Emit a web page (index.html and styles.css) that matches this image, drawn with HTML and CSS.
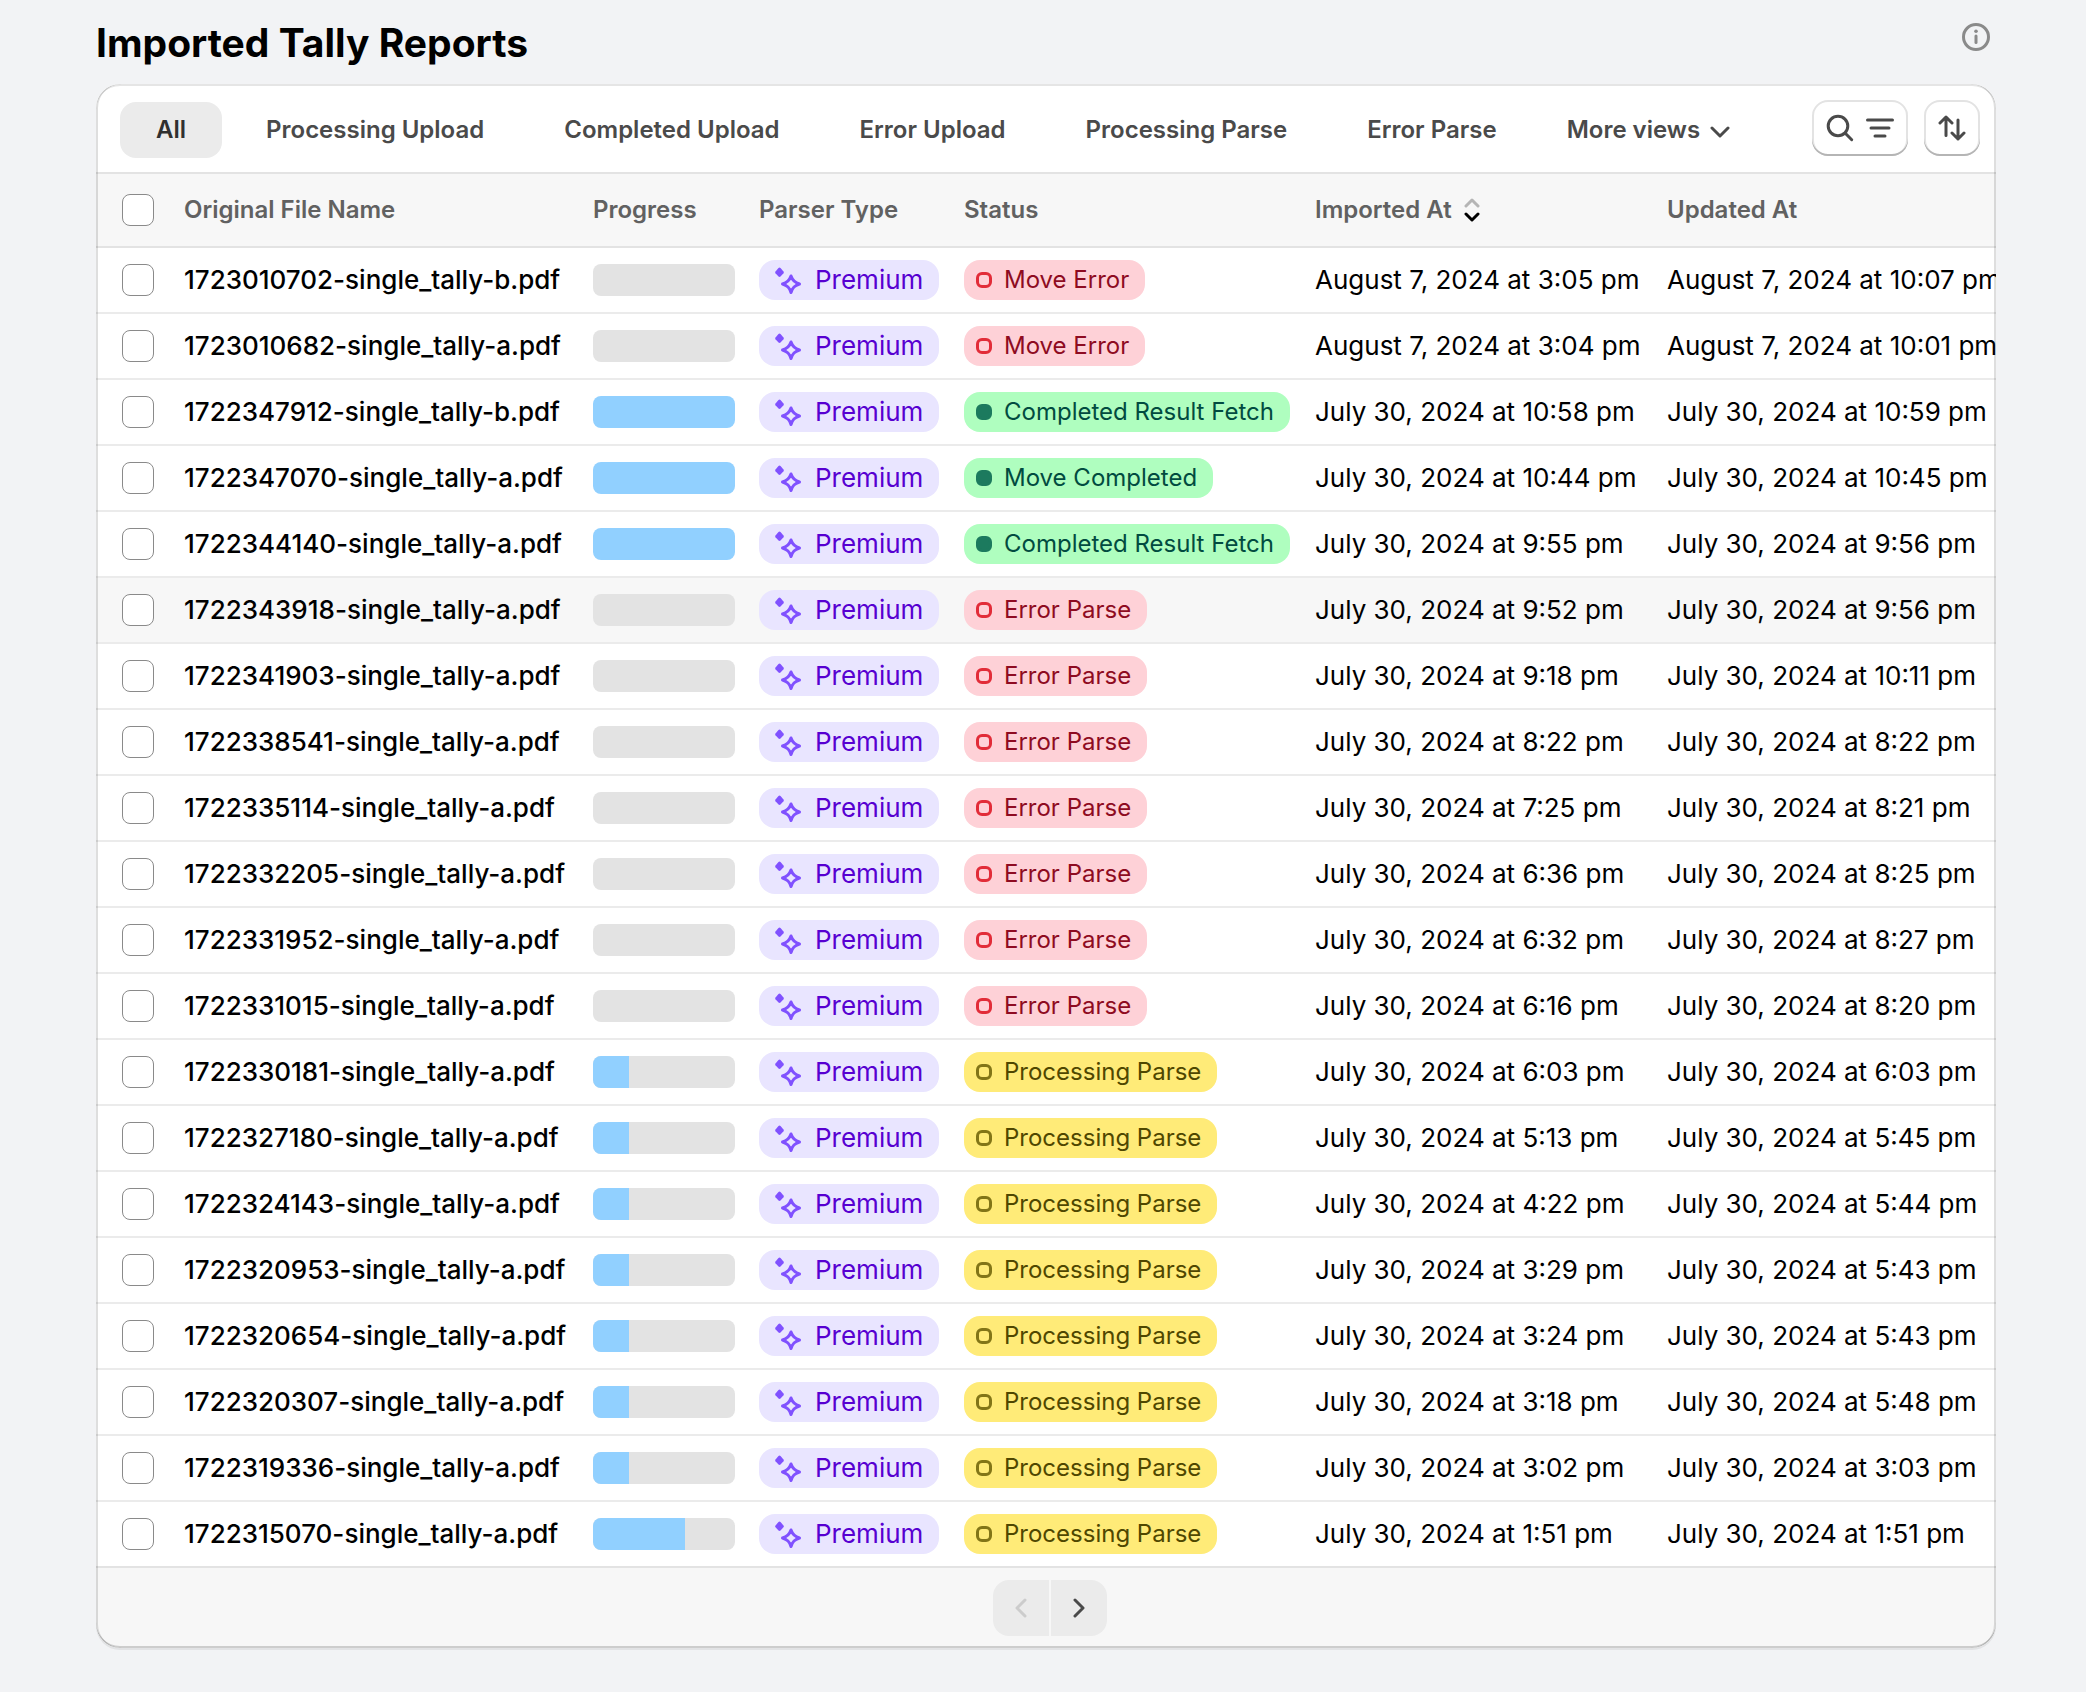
FILE: index.html
```html
<!DOCTYPE html>
<html lang="en">
<head>
<meta charset="utf-8">
<meta name="viewport" content="width=device-width, initial-scale=1">
<title>Imported Tally Reports</title>
<link rel="stylesheet" href="styles.css">
</head>
<body>
<svg class="sprite" aria-hidden="true">
  <symbol id="magic" viewBox="0 0 32 32">
    <path d="M8.500 3.500 Q9 3.500 9.500 4 L12.500 7.500 Q13.200 8.400 12.500 9.300 L9.500 12.500 Q8.500 13.400 7.500 12.500 L4.500 9.300 Q3.800 8.400 4.500 7.500 L7.500 4 Q8 3.500 8.500 3.500Z" fill="currentColor"/>
    <path d="M20 12 C21.500 16.500 23.500 18.500 28.500 20 C23.500 21.500 21.500 23.500 20 28.500 C18.500 23.500 16.500 21.500 11.500 20 C16.500 18.500 18.500 16.500 20 12Z" fill="none" stroke="currentColor" stroke-width="3" stroke-linejoin="round"/>
  </symbol>
</svg>
<main class="page">
  <header class="page-head">
    <h1>Imported Tally Reports</h1>
    <button class="info" type="button" aria-label="Information">
      <svg viewBox="0 0 28 28" width="28" height="28" fill="none" stroke="currentColor" stroke-width="3" stroke-linecap="round"><circle cx="14" cy="14" r="12.500"/><path d="M14 13v6.500"/><circle cx="14" cy="8.300" r="1.800" fill="currentColor" stroke="none"/></svg>
    </button>
  </header>
  <section class="card">
    <div class="toolbar">
      <nav class="tabs" aria-label="Views">
        <button class="tab active" type="button">All</button>
        <button class="tab" type="button">Processing Upload</button>
        <button class="tab" type="button">Completed Upload</button>
        <button class="tab" type="button">Error Upload</button>
        <button class="tab" type="button">Processing Parse</button>
        <button class="tab" type="button">Error Parse</button>
        <button class="tab more" type="button">More views
          <svg viewBox="0 0 20 14" width="20" height="14" fill="none" stroke="currentColor" stroke-width="3" stroke-linecap="round" stroke-linejoin="round"><path d="M2 3l8 8 8-8"/></svg>
        </button>
      </nav>
      <div class="tools">
        <button class="tool" type="button" aria-label="Search and filter">
          <svg viewBox="0 0 28 28" width="28" height="28" fill="none" stroke="currentColor" stroke-width="3" stroke-linecap="round"><circle cx="12" cy="12" r="9.800"/><path d="M19.300 19.300l6.400 6.400"/></svg>
          <svg viewBox="0 0 28 28" width="28" height="28" fill="none" stroke="currentColor" stroke-width="3" stroke-linecap="round"><path d="M1.500 6h25M5 14h18M9 22h10"/></svg>
        </button>
        <button class="tool" type="button" aria-label="Sort">
          <svg viewBox="0 0 28 28" width="28" height="28" fill="none" stroke="currentColor" stroke-width="3" stroke-linecap="round" stroke-linejoin="round"><path d="M8 21.500V3M2 9l6-6 6 6M20 6v19M14 19l6 6 6-6"/></svg>
        </button>
      </div>
    </div>
    <div class="table-wrap">
      <table>
        <colgroup><col class="col-check"><col class="col-name"><col class="col-progress"><col class="col-parser"><col class="col-status"><col class="col-imported"><col></colgroup>
        <thead>
          <tr>
            <th class="check"><input type="checkbox" aria-label="Select all"></th>
            <th scope="col">Original File Name</th>
            <th scope="col">Progress</th>
            <th scope="col">Parser Type</th>
            <th scope="col">Status</th>
            <th scope="col" aria-sort="descending"><button class="sort" type="button">Imported At
              <svg viewBox="0 0 16 24" width="16" height="24" fill="none" stroke-width="3" stroke-linecap="round" stroke-linejoin="round"><path d="M2 8l6-6 6 6" stroke="#b5b5b5"/><path d="M2 16l6 6 6-6" stroke="#000"/></svg>
            </button></th>
            <th scope="col">Updated At</th>
          </tr>
        </thead>
        <tbody>
          <tr><td class="check"><input type="checkbox" aria-label="Select 1723010702"></td><td class="name">1723010702-single_tally-b.pdf</td><td><progress max="100" value="0"></progress></td><td><span class="badge premium"><svg><use href="#magic"/></svg>Premium</span></td><td><span class="badge error">Move Error</span></td><td>August 7, 2024 at 3:05 pm</td><td>August 7, 2024 at 10:07 pm</td></tr>
          <tr><td class="check"><input type="checkbox" aria-label="Select 1723010682"></td><td class="name">1723010682-single_tally-a.pdf</td><td><progress max="100" value="0"></progress></td><td><span class="badge premium"><svg><use href="#magic"/></svg>Premium</span></td><td><span class="badge error">Move Error</span></td><td>August 7, 2024 at 3:04 pm</td><td>August 7, 2024 at 10:01 pm</td></tr>
          <tr><td class="check"><input type="checkbox" aria-label="Select 1722347912"></td><td class="name">1722347912-single_tally-b.pdf</td><td><progress max="100" value="100"></progress></td><td><span class="badge premium"><svg><use href="#magic"/></svg>Premium</span></td><td><span class="badge success">Completed Result Fetch</span></td><td>July 30, 2024 at 10:58 pm</td><td>July 30, 2024 at 10:59 pm</td></tr>
          <tr><td class="check"><input type="checkbox" aria-label="Select 1722347070"></td><td class="name">1722347070-single_tally-a.pdf</td><td><progress max="100" value="100"></progress></td><td><span class="badge premium"><svg><use href="#magic"/></svg>Premium</span></td><td><span class="badge success">Move Completed</span></td><td>July 30, 2024 at 10:44 pm</td><td>July 30, 2024 at 10:45 pm</td></tr>
          <tr><td class="check"><input type="checkbox" aria-label="Select 1722344140"></td><td class="name">1722344140-single_tally-a.pdf</td><td><progress max="100" value="100"></progress></td><td><span class="badge premium"><svg><use href="#magic"/></svg>Premium</span></td><td><span class="badge success">Completed Result Fetch</span></td><td>July 30, 2024 at 9:55 pm</td><td>July 30, 2024 at 9:56 pm</td></tr>
          <tr class="highlight"><td class="check"><input type="checkbox" aria-label="Select 1722343918"></td><td class="name">1722343918-single_tally-a.pdf</td><td><progress max="100" value="0"></progress></td><td><span class="badge premium"><svg><use href="#magic"/></svg>Premium</span></td><td><span class="badge error">Error Parse</span></td><td>July 30, 2024 at 9:52 pm</td><td>July 30, 2024 at 9:56 pm</td></tr>
          <tr><td class="check"><input type="checkbox" aria-label="Select 1722341903"></td><td class="name">1722341903-single_tally-a.pdf</td><td><progress max="100" value="0"></progress></td><td><span class="badge premium"><svg><use href="#magic"/></svg>Premium</span></td><td><span class="badge error">Error Parse</span></td><td>July 30, 2024 at 9:18 pm</td><td>July 30, 2024 at 10:11 pm</td></tr>
          <tr><td class="check"><input type="checkbox" aria-label="Select 1722338541"></td><td class="name">1722338541-single_tally-a.pdf</td><td><progress max="100" value="0"></progress></td><td><span class="badge premium"><svg><use href="#magic"/></svg>Premium</span></td><td><span class="badge error">Error Parse</span></td><td>July 30, 2024 at 8:22 pm</td><td>July 30, 2024 at 8:22 pm</td></tr>
          <tr><td class="check"><input type="checkbox" aria-label="Select 1722335114"></td><td class="name">1722335114-single_tally-a.pdf</td><td><progress max="100" value="0"></progress></td><td><span class="badge premium"><svg><use href="#magic"/></svg>Premium</span></td><td><span class="badge error">Error Parse</span></td><td>July 30, 2024 at 7:25 pm</td><td>July 30, 2024 at 8:21 pm</td></tr>
          <tr><td class="check"><input type="checkbox" aria-label="Select 1722332205"></td><td class="name">1722332205-single_tally-a.pdf</td><td><progress max="100" value="0"></progress></td><td><span class="badge premium"><svg><use href="#magic"/></svg>Premium</span></td><td><span class="badge error">Error Parse</span></td><td>July 30, 2024 at 6:36 pm</td><td>July 30, 2024 at 8:25 pm</td></tr>
          <tr><td class="check"><input type="checkbox" aria-label="Select 1722331952"></td><td class="name">1722331952-single_tally-a.pdf</td><td><progress max="100" value="0"></progress></td><td><span class="badge premium"><svg><use href="#magic"/></svg>Premium</span></td><td><span class="badge error">Error Parse</span></td><td>July 30, 2024 at 6:32 pm</td><td>July 30, 2024 at 8:27 pm</td></tr>
          <tr><td class="check"><input type="checkbox" aria-label="Select 1722331015"></td><td class="name">1722331015-single_tally-a.pdf</td><td><progress max="100" value="0"></progress></td><td><span class="badge premium"><svg><use href="#magic"/></svg>Premium</span></td><td><span class="badge error">Error Parse</span></td><td>July 30, 2024 at 6:16 pm</td><td>July 30, 2024 at 8:20 pm</td></tr>
          <tr><td class="check"><input type="checkbox" aria-label="Select 1722330181"></td><td class="name">1722330181-single_tally-a.pdf</td><td><progress max="100" value="25"></progress></td><td><span class="badge premium"><svg><use href="#magic"/></svg>Premium</span></td><td><span class="badge warning">Processing Parse</span></td><td>July 30, 2024 at 6:03 pm</td><td>July 30, 2024 at 6:03 pm</td></tr>
          <tr><td class="check"><input type="checkbox" aria-label="Select 1722327180"></td><td class="name">1722327180-single_tally-a.pdf</td><td><progress max="100" value="25"></progress></td><td><span class="badge premium"><svg><use href="#magic"/></svg>Premium</span></td><td><span class="badge warning">Processing Parse</span></td><td>July 30, 2024 at 5:13 pm</td><td>July 30, 2024 at 5:45 pm</td></tr>
          <tr><td class="check"><input type="checkbox" aria-label="Select 1722324143"></td><td class="name">1722324143-single_tally-a.pdf</td><td><progress max="100" value="25"></progress></td><td><span class="badge premium"><svg><use href="#magic"/></svg>Premium</span></td><td><span class="badge warning">Processing Parse</span></td><td>July 30, 2024 at 4:22 pm</td><td>July 30, 2024 at 5:44 pm</td></tr>
          <tr><td class="check"><input type="checkbox" aria-label="Select 1722320953"></td><td class="name">1722320953-single_tally-a.pdf</td><td><progress max="100" value="25"></progress></td><td><span class="badge premium"><svg><use href="#magic"/></svg>Premium</span></td><td><span class="badge warning">Processing Parse</span></td><td>July 30, 2024 at 3:29 pm</td><td>July 30, 2024 at 5:43 pm</td></tr>
          <tr><td class="check"><input type="checkbox" aria-label="Select 1722320654"></td><td class="name">1722320654-single_tally-a.pdf</td><td><progress max="100" value="25"></progress></td><td><span class="badge premium"><svg><use href="#magic"/></svg>Premium</span></td><td><span class="badge warning">Processing Parse</span></td><td>July 30, 2024 at 3:24 pm</td><td>July 30, 2024 at 5:43 pm</td></tr>
          <tr><td class="check"><input type="checkbox" aria-label="Select 1722320307"></td><td class="name">1722320307-single_tally-a.pdf</td><td><progress max="100" value="25"></progress></td><td><span class="badge premium"><svg><use href="#magic"/></svg>Premium</span></td><td><span class="badge warning">Processing Parse</span></td><td>July 30, 2024 at 3:18 pm</td><td>July 30, 2024 at 5:48 pm</td></tr>
          <tr><td class="check"><input type="checkbox" aria-label="Select 1722319336"></td><td class="name">1722319336-single_tally-a.pdf</td><td><progress max="100" value="25"></progress></td><td><span class="badge premium"><svg><use href="#magic"/></svg>Premium</span></td><td><span class="badge warning">Processing Parse</span></td><td>July 30, 2024 at 3:02 pm</td><td>July 30, 2024 at 3:03 pm</td></tr>
          <tr><td class="check"><input type="checkbox" aria-label="Select 1722315070"></td><td class="name">1722315070-single_tally-a.pdf</td><td><progress max="100" value="65"></progress></td><td><span class="badge premium"><svg><use href="#magic"/></svg>Premium</span></td><td><span class="badge warning">Processing Parse</span></td><td>July 30, 2024 at 1:51 pm</td><td>July 30, 2024 at 1:51 pm</td></tr>
        </tbody>
      </table>
    </div>
    <nav class="pager" aria-label="Pagination">
      <button type="button" disabled aria-label="Previous"><svg viewBox="0 0 12 20" width="12" height="20" fill="none" stroke="currentColor" stroke-width="3" stroke-linecap="round" stroke-linejoin="round"><path d="M10 2l-8 8 8 8"/></svg></button>
      <button type="button" aria-label="Next"><svg viewBox="0 0 12 20" width="12" height="20" fill="none" stroke="currentColor" stroke-width="3" stroke-linecap="round" stroke-linejoin="round"><path d="M2 2l8 8-8 8"/></svg></button>
    </nav>
  </section>
</main>
</body>
</html>
```
FILE: styles.css
```css
*, *::before, *::after { box-sizing: border-box; }

body {
  margin: 0;
  min-height: 100vh;
  background: #f2f3f5;
  color: #000;
  font: 400 26px/40px Inter, "Liberation Sans", sans-serif;
}

button {
  margin: 0;
  padding: 0;
  border: 0;
  background: none;
  color: inherit;
  font: inherit;
  cursor: pointer;
}

svg { display: block; flex: none; }
.sprite { position: absolute; width: 0; height: 0; }

.page { padding: 20px 90px 44px 96px; }

.page-head {
  display: flex;
  justify-content: space-between;
  align-items: flex-start;
  height: 64px;
  padding-right: 6px;
}

h1 {
  margin: 0;
  font-size: 39px;
  font-weight: 700;
  line-height: 46px;
}

.info { padding-top: 3px; color: #8a8a8a; }

.card {
  position: relative;
  overflow: hidden;
  border-radius: 24px;
  background: #f7f7f7;
  box-shadow: 0 2px 0 rgba(26, 26, 26, .07);
}

/* bevelled edge drawn over the rows */
.card::after {
  content: "";
  position: absolute;
  inset: 0;
  border-radius: inherit;
  pointer-events: none;
  box-shadow:
    inset 2px 0 0 rgba(0, 0, 0, .13),
    inset -2px 0 0 rgba(0, 0, 0, .13),
    inset 0 -2px 0 rgba(0, 0, 0, .17),
    inset 0 2px 0 rgba(204, 204, 204, .5);
}

.toolbar {
  display: flex;
  justify-content: space-between;
  align-items: flex-start;
  padding: 16px 16px 14px 24px;
  border-bottom: 2px solid #e3e3e3;
  background: #fff;
}

.tabs { display: flex; gap: 8px; padding-top: 2px; }

.tab {
  padding: 0 36px;
  border-radius: 16px;
  color: #4a4a4a;
  font-size: 24px;
  font-weight: 600;
  line-height: 56px;
  white-space: nowrap;
}
.tab.active { background: #ebebeb; color: #303030; }
.tab.more { display: flex; align-items: center; gap: 10px; padding: 0 26px; }
.tab.more svg { margin-top: 4px; }

.tools { display: flex; gap: 16px; }
.tool {
  display: flex;
  align-items: center;
  gap: 12px;
  height: 56px;
  padding: 0 14px;
  border-radius: 16px;
  background: #fff;
  color: #4a4a4a;
  box-shadow: inset 0 -2px 0 #b5b5b5, inset 0 0 0 2px #e3e3e3;
}

.table-wrap { overflow: hidden; background: #fff; }

table {
  width: 100%;
  table-layout: fixed;
  border-collapse: separate;
  border-spacing: 0;
  white-space: nowrap;
}

.col-check { width: 76px; }
.col-name { width: 409px; }
.col-progress { width: 166px; }
.col-parser { width: 205px; }
.col-status { width: 351px; }
.col-imported { width: 352px; }

th, td { padding: 0 12px; text-align: left; vertical-align: middle; }

th {
  height: 74px;
  border-bottom: 2px solid #e3e3e3;
  background: #f7f7f7;
  color: #616161;
  font-size: 24px;
  font-weight: 600;
}

td { height: 66px; border-bottom: 2px solid #ebebeb; }
tr:last-child td { border-bottom-color: #e3e3e3; }
.highlight td { background: #f7f7f7; }

.check { padding: 0 18px 0 26px; }
.name { font-weight: 500; }

input[type="checkbox"] {
  display: block;
  appearance: none;
  width: 32px;
  height: 32px;
  margin: 0;
  border: 1px solid #8a8a8a;
  border-radius: 8px;
  background: #fff;
}

progress {
  display: block;
  appearance: none;
  width: 142px;
  height: 32px;
  overflow: hidden;
  border: 0;
  border-radius: 8px;
  background: #e3e3e3;
}
progress::-webkit-progress-bar { background: #e3e3e3; }
progress::-webkit-progress-value { background: #91d0ff; }

.badge {
  display: flex;
  align-items: center;
  gap: 12px;
  width: max-content;
  height: 40px;
  padding: 0 16px 0 12px;
  border-radius: 16px;
  font-size: 24px;
}
.badge::before {
  content: "";
  width: 16px;
  height: 16px;
  border: 3px solid;
  border-radius: 6px;
}

.premium { background: #e9e5ff; color: #5700d1; font-size: 26px; }
.premium::before { display: none; }
.premium svg { width: 32px; height: 32px; color: #8051ff; }
.error { background: #fed1d7; color: #8e0b21; }
.error::before { border-color: #e22c38; }
.success { background: #affebf; color: #014b40; }
.success::before { border-color: #1c7a5e; background: #1c7a5e; }
.warning { background: #ffeb78; color: #4f4700; }
.warning::before { border-color: #827517; }

.sort { display: flex; align-items: center; gap: 12px; }

.pager { display: flex; justify-content: center; gap: 2px; padding: 12px; padding-right: 4px; }
.pager button {
  display: grid;
  place-items: center;
  width: 56px;
  height: 56px;
  background: #ebebeb;
  color: #4a4a4a;
}
.pager button:first-child { border-radius: 16px 0 0 16px; }
.pager button:last-child { border-radius: 0 16px 16px 0; }
.pager button:disabled { color: #ccc; cursor: default; }
```
